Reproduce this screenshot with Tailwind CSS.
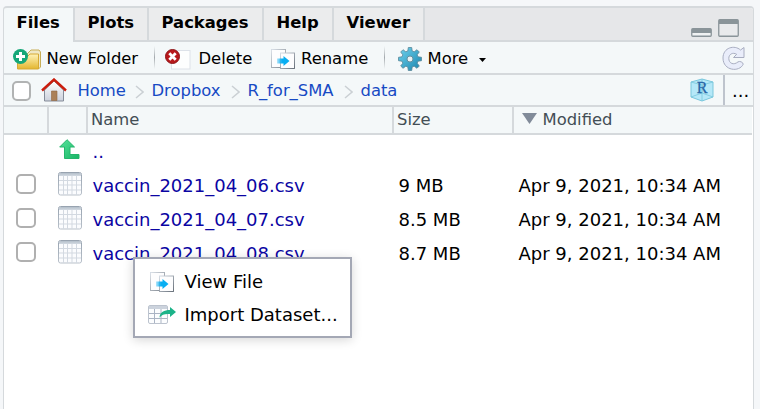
<!DOCTYPE html>
<html lang="en">
<head>
<meta charset="utf-8">
<title>Files</title>
<script src="https://cdn.jsdelivr.net/npm/@tailwindcss/browser@4"></script>
</head>
<body class="w-[760px] h-[409px] overflow-hidden bg-[#f5f7f9] font-['DejaVu_Sans',sans-serif] text-[16.4px] leading-5 text-black">
<svg class="absolute w-0 h-0" aria-hidden="true">
  <defs>
    <linearGradient id="gold" x1="0" y1="0" x2="0" y2="1"><stop offset="0" stop-color="#fff3b8"/><stop offset="1" stop-color="#e3b62f"/></linearGradient>
    <linearGradient id="gear" x1="0" y1="0" x2="1" y2="1"><stop offset="0" stop-color="#6fd3ee"/><stop offset="1" stop-color="#1a84ad"/></linearGradient>
    <linearGradient id="wall" x1="0" y1="0" x2="0" y2="1"><stop offset="0" stop-color="#fff"/><stop offset="1" stop-color="#ccd1dc"/></linearGradient>
    <linearGradient id="green" x1="0" y1="0" x2="1" y2="1"><stop offset="0" stop-color="#56e39a"/><stop offset="1" stop-color="#18b566"/></linearGradient>
    <linearGradient id="page" x1="0" y1="0" x2="1" y2="1"><stop offset="0" stop-color="#d3dae3"/><stop offset="1" stop-color="#59626d"/></linearGradient>
    <linearGradient id="arrow" x1="0" y1="0" x2="1" y2="0"><stop offset="0" stop-color="#08aef2" stop-opacity=".3"/><stop offset=".4" stop-color="#08aef2"/></linearGradient>
    <linearGradient id="cap" x1="0" y1="0" x2="0" y2="1"><stop offset="0" stop-color="#b4bfca"/><stop offset="1" stop-color="#d3dae2"/></linearGradient>
    <linearGradient id="edge" x1="0" y1="0" x2="0" y2="1"><stop offset="0" stop-color="#98a3b0"/><stop offset="1" stop-color="#b9c1ca"/></linearGradient>
    <symbol id="sheet" viewBox="0 0 24 24">
      <rect x=".5" y=".5" width="23" height="22.500" rx="2" fill="#fbfcfe" stroke="url(#edge)"/>
      <path d="M1 4V2.500Q1 1 2.500 1h19Q23 1 23 2.500V4z" fill="url(#cap)"/>
      <path d="M5.500 4v19M9.500 4v19M14 4v19M18.500 4v19M1 8.500h22M1 13h22M1 18h22" stroke="#d3d9e1" fill="none"/>
    </symbol>
    <symbol id="pages" viewBox="0 0 25 21">
      <rect x=".5" y=".5" width="14" height="18" fill="#fdfdfe" stroke="url(#page)" stroke-width=".8"/>
      <rect x="9.500" y="4" width="14" height="15.500" fill="#fdfdfe" stroke="url(#page)" stroke-width=".9"/>
      <path d="M6 9.500h6.500V7l6 5-6 5v-2.500H6z" fill="url(#arrow)"/>
    </symbol>
  </defs>
</svg>
<main class="relative ml-[3px] pt-[6px] w-[751px] h-[409px]">
  <section class="h-[403px] border-t-2 border-l border-r border-[#d5d9dc] rounded-t-[4px] bg-white overflow-hidden">
    <nav class="flex h-[34px] bg-[#e6e7e9] font-bold leading-[29px]">
      <div class="w-[71px] pl-[12.500px] bg-[#f4f8f9] border-r-2 border-[#d5d9dc] rounded-tl-[3px]">Files</div>
      <div class="w-[74px] pl-[12.500px] bg-[#ebeced] border-r-2 border-b-2 border-[#d5d9dc]">Plots</div>
      <div class="w-[115px] pl-[12.500px] bg-[#ebeced] border-r-2 border-b-2 border-[#d5d9dc]">Packages</div>
      <div class="w-[70px] pl-[12.500px] bg-[#ebeced] border-r-2 border-b-2 border-[#d5d9dc]">Help</div>
      <div class="w-[91px] pl-[12.500px] bg-[#ebeced] border-r-2 border-b-2 border-[#d5d9dc]">Viewer</div>
      <div class="flex flex-1 items-end justify-end gap-[6px] pr-[14px] pb-[3px] border-b-2 border-[#d5d9dc]">
        <svg class="w-[21px] h-[9px] block" viewBox="0 0 21 9"><rect x=".75" y=".75" width="19.500" height="7.500" rx="1" fill="#eff1f2" stroke="#8a9499" stroke-width="1.300"/><path d="M1 1h19v4H1z" fill="#8a9499"/></svg>
        <svg class="w-[21px] h-[18px] block" viewBox="0 0 21 18"><rect x=".75" y=".75" width="19.500" height="16.500" rx="1" fill="#e9eaec" stroke="#8a9499" stroke-width="1.300"/><path d="M1 1h19v4H1z" fill="#8a9499"/></svg>
      </div>
    </nav>

    <div class="flex h-[33px] items-center bg-[#f4f8f9] border-b-2 border-[#d5d9dc] pl-[9px]">
      <svg class="w-7 h-[21px] mt-[3px]" viewBox="0 0 28 21">
        <path d="M14 8V5l4-4h8l1.500 2v15l-2 2" fill="#efe8c6" stroke="#c8ae57"/>
        <path d="M4.500 7H15l2-2h8.500v15H4.500z" fill="url(#gold)" stroke="#d6aa35"/>
        <circle cx="7.500" cy="7.500" r="7.500" fill="#15a778"/><path d="M7.500 3v9M3 7.500h9" stroke="#fff" stroke-width="3"/>
      </svg>
      <span class="ml-[5.500px] w-[107.500px] pt-[2px]">New Folder</span>
      <i class="w-px h-[23px] bg-linear-to-b from-transparent via-[#a4aaae] to-transparent"></i>
      <svg class="ml-[10px] w-[26px] h-[21px] mt-[3px]" viewBox="0 0 26 21">
        <rect x="6.500" y="1.500" width="18.500" height="18.500" fill="#fdfefe" stroke="#dde2e9"/>
        <circle cx="7.500" cy="7.500" r="7" fill="#b8191c" stroke="#8e1518"/><path d="M4.300 4.300l6.400 6.400M10.700 4.300l-6.400 6.400" stroke="#fff" stroke-width="2.800"/>
      </svg>
      <span class="ml-[7.500px] w-[72px] pt-[2px]">Delete</span>
      <svg class="w-[25px] h-[21px] mt-[3px]"><use href="#pages"/></svg>
      <span class="ml-[5.500px] w-[83px] pt-[2px]">Rename</span>
      <i class="w-px h-[23px] bg-linear-to-b from-transparent via-[#a4aaae] to-transparent"></i>
      <svg class="ml-[13px] w-[24px] h-[24px] mt-[3px]" viewBox="-12 -12 24 24">
        <path d="M-2.200-8L-1.700-11.500H1.700L2.200-8 4.200-7.200 7-9.300 9.300-7 7.200-4.200 8-2.200 11.500-1.700V1.700L8 2.200 7.200 4.200 9.300 7 7 9.300 4.200 7.200 2.200 8 1.700 11.500H-1.700L-2.200 8-4.200 7.200-7 9.300-9.300 7-7.200 4.200-8 2.200-11.500 1.700V-1.700L-8-2.200-7.200-4.200-9.300-7-7-9.300-4.200-7.200z" fill="url(#gear)" stroke="#5b8798" stroke-width=".8" stroke-linejoin="round"/>
        <circle r="3" fill="#e8f2f5" stroke="#66909f"/>
      </svg>
      <span class="ml-[5.500px] w-[51px] pt-[2px]">More</span>
      <svg class="w-[7px] h-1 mt-[5px]" viewBox="0 0 8 4" preserveAspectRatio="none"><path d="M0 0h8L4 4z"/></svg>
      <svg class="ml-auto mr-[8px] w-[23px] h-[24px]" viewBox="0 0 23 24">
        <path d="M22 1.500v10H11.500l3.200-3.200C10.500 5.800 6.800 8.500 6.800 12.300c0 5.300 5 7.200 9.200 3.600 1.500-1.200 5.200.3 5.200 2.300C17.500 26.500 1 25 1 12 1 1.500 12.500-1.500 18.500 4z" fill="#e9edfa" stroke="#a8adc0" stroke-linejoin="round"/>
      </svg>
    </div>

    <div class="flex h-8 items-center bg-[#f4f8f9] border-b-2 border-[#d5d9dc] pl-[8px] text-[#174ac4]">
      <span class="w-[19px] h-5 mt-[2px] border-2 border-[#b1b3b3] rounded-[5px] bg-white"></span>
      <svg class="ml-[10px] w-[26px] h-[24px]" viewBox="0 0 26 24">
        <path d="M3.500 12L13 3l9.500 9v11h-19z" fill="url(#wall)" stroke="#858c99"/>
        <path d="M10.500 13h5.500v9.500h-5.500z" fill="#ab8058" stroke="#8f653f" stroke-width=".6"/>
        <path d="M1 12.500L13 1.500l12 11" fill="none" stroke="#cb1d0d" stroke-width="2.400"/>
      </svg>
      <span class="ml-[10.500px] w-[57.500px] pt-[2px]">Home</span>
      <svg class="w-[9px] h-[14px] mt-[3px]" viewBox="0 0 9 14"><path d="M1 1l7 6-7 6" fill="none" stroke="#cbd0d4" stroke-width="1.500"/></svg>
      <span class="ml-[7.500px] w-[79.500px] pt-[2px]">Dropbox</span>
      <svg class="w-[9px] h-[14px] mt-[3px]" viewBox="0 0 9 14"><path d="M1 1l7 6-7 6" fill="none" stroke="#cbd0d4" stroke-width="1.500"/></svg>
      <span class="ml-[7.500px] w-[96.500px] pt-[2px]">R_for_SMA</span>
      <svg class="w-[9px] h-[14px] mt-[3px]" viewBox="0 0 9 14"><path d="M1 1l7 6-7 6" fill="none" stroke="#cbd0d4" stroke-width="1.500"/></svg>
      <span class="ml-[7.500px] pt-[2px]">data</span>
      <svg class="ml-auto w-[24px] h-[24px]" viewBox="0 0 24 24">
        <path d="M12 1l11 3v15l-11 4-11-4V4z" fill="#b5e8f8" stroke="#7bc7dc"/>
        <path d="M1 4l11 3 11-3M12 7v16M12 1v14M1 19l11-4 11 4" fill="none" stroke="#79c8dc" stroke-width=".8"/>
        <text x="12" y="15" text-anchor="middle" font-family="Liberation Serif, serif" font-size="16" fill="#2866a6" stroke="#2866a6" stroke-width=".3">R</text>
      </svg>
      <div class="ml-[9px] w-[30px] h-[30px] pl-[7px] pt-[6px] border-l-2 border-[#bec4cd] text-black text-[18px]">...</div>
    </div>

    <div class="flex h-7 mr-px bg-[#f4f8f9] border-b-2 border-[#d5d9dc] text-[#434e55] leading-[25px]">
      <div class="w-[45px] border-r-2 border-[#d5d9dc]"></div>
      <div class="w-[39px] border-r-2 border-[#d5d9dc]"></div>
      <div class="w-[306px] pl-[3px] border-r-2 border-[#d5d9dc]">Name</div>
      <div class="w-[120px] pl-[3px] border-r-2 border-[#d5d9dc]">Size</div>
      <div class="flex pl-[8px]"><svg class="w-[15px] h-[11px] mt-[6px] mr-[5.500px]" viewBox="0 0 15 11"><path d="M0 0h15L7.500 11z" fill="#818b99"/></svg>Modified</div>
    </div>

    <div class="text-[18px] leading-[34px]">
      <div class="flex h-[34px] text-[#0b05a3]">
        <svg class="ml-[55px] mt-1 w-[21px] h-[21px]" viewBox="0 0 21 21"><path d="M8 .7L15.500 8H11v7.500h9v4H5.500V8H.7z" fill="url(#green)" stroke="#24b66c" stroke-linejoin="round"/></svg>
        <span class="ml-[12.500px]">..</span>
      </div>
      <div class="flex h-[34px]"><span class="ml-[12px] mt-[5px] w-5 h-5 border-2 border-[#b0b0b0] rounded-[5px]"></span><svg class="ml-[22px] mt-[3px] w-6 h-6"><use href="#sheet"/></svg><span class="ml-[10.500px] w-[306px] text-[#0b05a3]">vaccin_2021_04_06.csv</span><span class="w-[120px]">9 MB</span><span>Apr 9, 2021, 10:34 AM</span></div>
      <div class="flex h-[34px]"><span class="ml-[12px] mt-[5px] w-5 h-5 border-2 border-[#b0b0b0] rounded-[5px]"></span><svg class="ml-[22px] mt-[3px] w-6 h-6"><use href="#sheet"/></svg><span class="ml-[10.500px] w-[306px] text-[#0b05a3]">vaccin_2021_04_07.csv</span><span class="w-[120px]">8.5 MB</span><span>Apr 9, 2021, 10:34 AM</span></div>
      <div class="flex h-[34px]"><span class="ml-[12px] mt-[5px] w-5 h-5 border-2 border-[#b0b0b0] rounded-[5px]"></span><svg class="ml-[22px] mt-[3px] w-6 h-6"><use href="#sheet"/></svg><span class="ml-[10.500px] w-[306px] text-[#0b05a3]">vaccin_2021_04_08.csv</span><span class="w-[120px]">8.7 MB</span><span>Apr 9, 2021, 10:34 AM</span></div>
    </div>
  </section>

  <div class="absolute left-[130px] top-[257px] w-[219px] h-[81px] pt-[6px] border-2 border-[#a4a8b5] bg-white shadow-[0_2px_10px_rgba(0,0,0,.16)] text-[18px] leading-[33px]">
    <div class="flex h-[33px] items-center"><svg class="ml-[15px] mt-px w-[25px] h-[21px]"><use href="#pages"/></svg><span class="ml-[9.500px]">View File</span></div>
    <div class="flex h-[33px] items-center">
      <svg class="ml-[13px] w-[29px] h-[20px]" viewBox="0 0 29 20">
        <rect x=".5" y=".5" width="19" height="18" rx="1.500" fill="#fcfdfe" stroke="#bcc3ce"/><path d="M1 1h18v3H1z" fill="#ccd3dd"/>
        <path d="M6.500 4v14M13 4v14M1 8.500h18M1 13.500h18" stroke="#aab4c4"/>
        <path d="M11.500 12.500C12 7 16 5 22 5V2l6 5-6 5V9c-5-.5-8 .5-10.500 3.500z" fill="#1cb389"/>
      </svg>
      <span class="ml-[7.500px]">Import Dataset...</span>
    </div>
  </div>
</main>
</body>
</html>
